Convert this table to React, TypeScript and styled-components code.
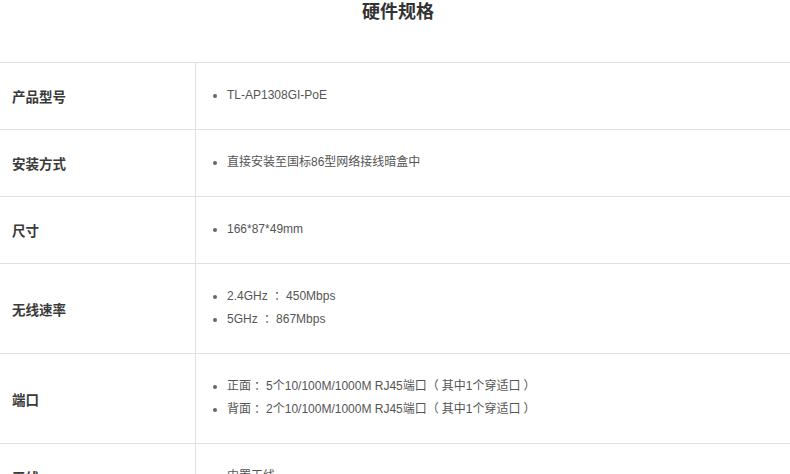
import React from "react";
import styled, { createGlobalStyle } from "styled-components";

const Global = createGlobalStyle`
  html, body { margin: 0; padding: 0; background: #fff; }
  body {
    font-family: "Liberation Sans", "Noto Sans CJK SC", sans-serif;
    color: #333;
    overflow: hidden;
  }
`;

const Page = styled.div`
  width: 790px;
`;

const Title = styled.h2`
  margin: 0;
  height: 62px;
  padding-left: 6px;
  box-sizing: border-box;
  text-align: center;
  font-size: 18px;
  line-height: 25px;
  font-weight: bold;
  color: #333;
`;

const Table = styled.div`
  display: flex;
  flex-direction: column;
`;

const Row = styled.div`
  display: grid;
  grid-template-columns: 196px 1fr;
  border-top: 1px solid #e1e1e1;
`;

const Label = styled.div`
  display: flex;
  align-items: center;
  padding-left: 12px;
  border-right: 1px solid #e1e1e1;
  font-size: 13.5px;
  font-weight: bold;
  color: #3a3a3a;
`;

const Value = styled.ul`
  margin: 0;
  padding: 21px 0 22px 31px;
  list-style: disc outside;
  font-size: 12px;
  line-height: 23px;
  color: #555;
`;

const Item = styled.li`
  height: 23px;
  white-space: nowrap;
  &::marker { color: #666; }
`;

type PunctKind = "colon" | "open" | "close";

const pads: Record<PunctKind, string> = {
  colon: "0 0 0 3px",
  open: "0 3px 0 0",
  close: "0 0 0 3px",
};

const Punct = styled.span<{ $kind: PunctKind }>`
  padding: ${(p) => pads[p.$kind]};
`;

const specs: { label: string; items: string[] }[] = [
  { label: "产品型号", items: ["TL-AP1308GI-PoE"] },
  { label: "安装方式", items: ["直接安装至国标86型网络接线暗盒中"] },
  { label: "尺寸", items: ["166*87*49mm"] },
  { label: "无线速率", items: ["2.4GHz ：450Mbps", "5GHz ：867Mbps"] },
  {
    label: "端口",
    items: [
      "正面：5个10/100M/1000M RJ45端口（其中1个穿适口）",
      "背面：2个10/100M/1000M RJ45端口（其中1个穿适口）",
    ],
  },
  { label: "天线", items: ["内置天线"] },
];

const kindOf: Record<string, PunctKind> = { "：": "colon", "（": "open", "）": "close" };

function renderText(text: string) {
  return text.split(/([：（）])/).map((part, i) =>
    kindOf[part] ? (
      <Punct key={i} $kind={kindOf[part]}>
        {part}
      </Punct>
    ) : (
      part
    )
  );
}

export default function App() {
  return (
    <Page>
      <Global />
      <Title>硬件规格</Title>
      <Table>
        {specs.map((s) => (
          <Row key={s.label}>
            <Label>{s.label}</Label>
            <Value>
              {s.items.map((it) => (
                <Item key={it}>{renderText(it)}</Item>
              ))}
            </Value>
          </Row>
        ))}
      </Table>
    </Page>
  );
}
